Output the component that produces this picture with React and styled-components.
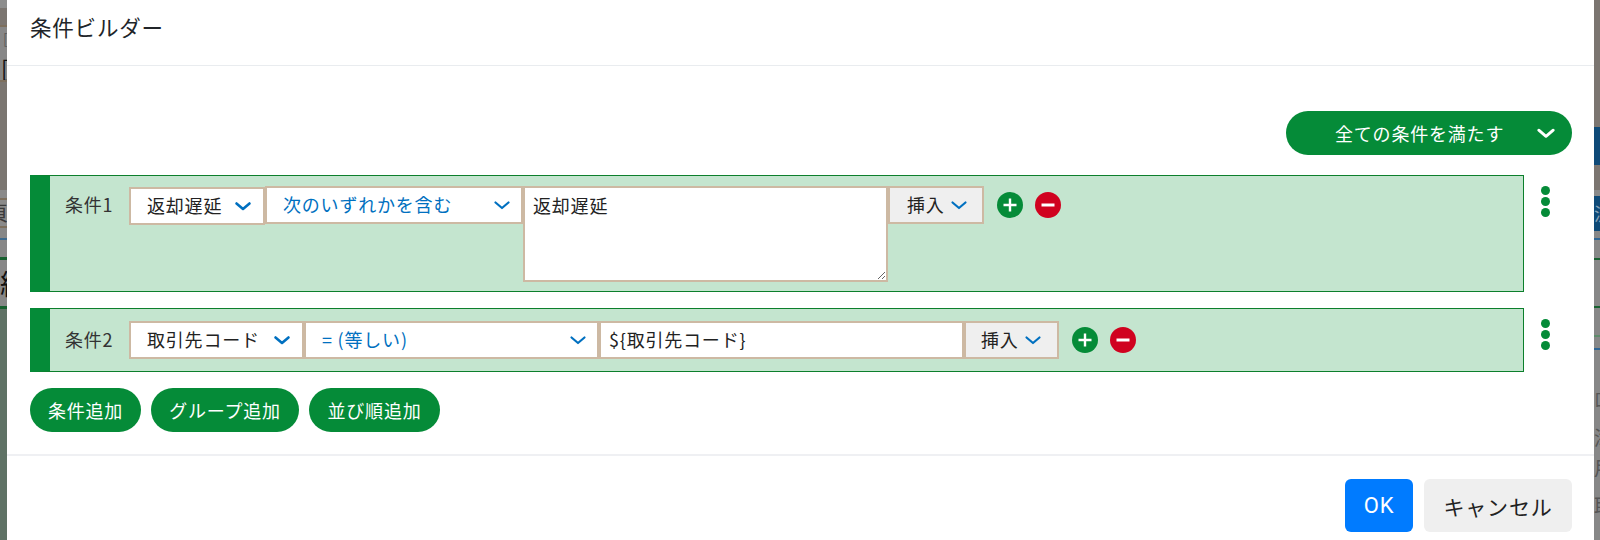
import React from "react"
import styled, { createGlobalStyle } from "styled-components"

const GlobalStyle = createGlobalStyle`
  html, body {
    margin: 0;
    padding: 0;
    background: #fff;
    overflow: hidden;
  }
  body {
    font-family: "Noto Sans CJK JP", "Noto Sans", sans-serif;
    color: #222;
    letter-spacing: 0.05em;
  }
`

const Page = styled.div`
  display: flex;
  width: 1600px;
  height: 540px;
  overflow: hidden;
`

const Backdrop = styled.div`
  display: flex;
  flex-direction: column;
  flex: none;
  width: ${(p) => p.$w}px;
  background: #878787;
  overflow: hidden;
`

const Band = styled.div`
  flex: none;
  height: ${(p) => p.$h}px;
  background: ${(p) => p.$c || "#878787"};
  color: ${(p) => p.$fg || "#3a3a3a"};
  font-size: ${(p) => p.$size || 20}px;
  line-height: ${(p) => p.$h}px;
  padding-left: ${(p) => p.$pad || 0}px;
  margin-left: ${(p) => p.$shift || 0}px;
  letter-spacing: 0;
  white-space: nowrap;
`

const Dialog = styled.div`
  flex: 1;
  display: flex;
  flex-direction: column;
  min-width: 0;
  background: #fff;
`

const Header = styled.header`
  height: 66px;
  padding: 10px 23px;
  box-sizing: border-box;
  border-bottom: 1px solid #e9ecef;
  font-size: 21.5px;
  line-height: 34px;
  color: #212529;
`

const Body = styled.div`
  padding: 45px 22px 0 23px;
  height: 390px;
  box-sizing: border-box;
  border-bottom: 2px solid #eff0f3;
`

const TopBar = styled.div`
  display: flex;
  justify-content: flex-end;
`

const MatchSelect = styled.div`
  display: flex;
  align-items: center;
  width: 286px;
  height: 44px;
  box-sizing: border-box;
  padding: 0 16px 0 49px;
  border-radius: 22px;
  background: #058b38;
  color: #fff;
  font-size: 18px;
  justify-content: space-between;
`

const RowWrap = styled.div`
  display: flex;
  align-items: flex-start;
  margin-top: ${(p) => p.$top}px;
`

const Row = styled.div`
  display: flex;
  align-items: flex-start;
  width: 1494px;
  height: ${(p) => p.$h}px;
  box-sizing: border-box;
  padding: ${(p) => p.$pad}px 0 0 15px;
  background: #c4e5cf;
  border: 1px solid #0c7f2c;
  border-left: 20px solid #058b38;
`

const RowLabel = styled.span`
  flex: none;
  width: 64px;
  font-size: 18px;
  line-height: 36px;
  color: #333;
`

const Field = styled.div`
  flex: none;
  display: flex;
  align-items: center;
  justify-content: space-between;
  width: ${(p) => p.$w}px;
  height: 38px;
  box-sizing: border-box;
  margin-top: ${(p) => p.$top || 0}px;
  padding: 0 ${(p) => p.$right || 10}px 2px ${(p) => p.$left || 16}px;
  background: ${(p) => p.$bg || "#fff"};
  border: 2px solid #cdb9a3;
  color: ${(p) => p.$color || "#222"};
  font-size: 18px;
  white-space: nowrap;

  svg {
    margin-top: 2px;
  }
`

const FieldArea = styled.textarea`
  flex: none;
  display: block;
  width: 365px;
  height: 96px;
  box-sizing: border-box;
  margin: 0;
  padding: 3px 8px;
  background: #fff;
  border: 2px solid #cdb9a3;
  border-radius: 0;
  outline: none;
  color: #222;
  font-family: inherit;
  font-size: 18px;
  letter-spacing: inherit;
  line-height: 28px;
`

const InsertButton = styled(Field)`
  justify-content: flex-start;
  gap: 5px;
  padding: 0 0 3px ${(p) => p.$left || 17}px;
  background: #efefef;
`

const RoundIcon = styled.svg`
  flex: none;
  display: block;
  width: 26px;
  height: 26px;
  margin-top: 6px;
  margin-left: ${(p) => p.$gap}px;
`

const Kebab = styled.div`
  flex: none;
  display: flex;
  flex-direction: column;
  gap: 2px;
  margin: 11px 0 0 17px;
`

const Dot = styled.span`
  display: block;
  width: 9px;
  height: 9px;
  border-radius: 50%;
  background: #058b38;
`

const AddBar = styled.div`
  display: flex;
  gap: 10px;
  margin-top: 16px;
`

const AddButton = styled.button`
  width: ${(p) => p.$w}px;
  height: 44px;
  padding: 0;
  border: 0;
  border-radius: 22px;
  background: #058b38;
  color: #fff;
  font-family: inherit;
  font-size: 18px;
  letter-spacing: inherit;
`

const Footer = styled.footer`
  display: flex;
  justify-content: flex-end;
  gap: 11px;
  padding: 23px 22px 0 0;
`

const DialogButton = styled.button`
  width: ${(p) => p.$w}px;
  height: 53px;
  padding: 0;
  border: 0;
  border-radius: 6px;
  background: ${(p) => p.$bg};
  color: ${(p) => p.$color};
  font-family: ${(p) => (p.$latin ? "Roboto, sans-serif" : "inherit")};
  font-size: ${(p) => (p.$latin ? 22 : 21)}px;
  letter-spacing: inherit;
`

const Chevron = ({ color = "#0070c0", size = 18, weight = 2.6 }) => (
  <svg width={size} height={size} viewBox="0 0 18 18" fill="none">
    <path
      d="M2.5 6.5 L9 12 L15.5 6.5"
      stroke={color}
      strokeWidth={weight}
      strokeLinecap="round"
      strokeLinejoin="round"
    />
  </svg>
)

const PlusIcon = ({ gap }) => (
  <RoundIcon $gap={gap} viewBox="0 0 26 26">
    <circle cx="13" cy="13" r="13" fill="#058b38" />
    <path d="M13 6.5 V19.5 M6.5 13 H19.5" stroke="#fff" strokeWidth="2.4" />
  </RoundIcon>
)

const MinusIcon = ({ gap }) => (
  <RoundIcon $gap={gap} viewBox="0 0 26 26">
    <circle cx="13" cy="13" r="13" fill="#d0021f" />
    <path d="M6.5 13 H19.5" stroke="#fff" strokeWidth="3" />
  </RoundIcon>
)

const Dots = () => (
  <Kebab>
    <Dot />
    <Dot />
    <Dot />
  </Kebab>
)

const leftBands = [
  { h: 8, c: "#8d8d8d" },
  { h: 17, c: "#7b7570" },
  { h: 2, c: "#7d6f5d" },
  { h: 22, c: "#878787", t: "[", size: 14, pad: 3, fg: "#5a5a5a" },
  { h: 5, c: "#878787" },
  { h: 26, c: "#878787", t: "[", size: 22, pad: 1, fg: "#111" },
  { h: 2, c: "#7d6f5d" },
  { h: 108, c: "#7a7570" },
  { h: 8, c: "#8a8a8a" },
  { h: 2, c: "#7d6f5d" },
  { h: 26, c: "#8a8a8a", t: "頁", size: 20, shift: -12 },
  { h: 2, c: "#7d6f5d" },
  { h: 10, c: "#878787" },
  { h: 2, c: "#3d6a8e" },
  { h: 17, c: "#878787" },
  { h: 3, c: "#17602f" },
  { h: 46, c: "#878787", t: "紙", size: 28, fg: "#111" },
  { h: 3, c: "#17602f" },
  { h: 231, c: "#5f7265" },
]

const rightBands = [
  { h: 127, c: "#7b7570" },
  { h: 38, c: "#0e4a78" },
  { h: 25, c: "#7b7570" },
  { h: 6, c: "#8a8a8a" },
  { h: 35, c: "#0e4a78", t: "流", size: 18, fg: "#8aa2b6" },
  { h: 7, c: "#878787" },
  { h: 2, c: "#2f6594" },
  { h: 18, c: "#878787" },
  { h: 2, c: "#17602f" },
  { h: 46, c: "#878787" },
  { h: 2, c: "#17602f" },
  { h: 27, c: "#878787" },
  { h: 2, c: "#5f8c6c" },
  { h: 11, c: "#878787" },
  { h: 2, c: "#2f6594" },
  { h: 42, c: "#878787" },
  { h: 15, c: "#878787", t: "口", size: 18, fg: "#555" },
  { h: 22, c: "#878787" },
  { h: 18, c: "#878787", t: "添", size: 20, fg: "#555" },
  { h: 12, c: "#878787" },
  { h: 18, c: "#878787", t: "用", size: 20, fg: "#555" },
  { h: 20, c: "#878787" },
  { h: 18, c: "#878787", t: "取", size: 20, fg: "#555" },
]

const BackdropBands = ({ bands, w }) => (
  <Backdrop $w={w}>
    {bands.map((b, i) => (
      <Band key={i} $h={b.h} $c={b.c} $fg={b.fg} $size={b.size} $pad={b.pad} $shift={b.shift}>
        {b.t}
      </Band>
    ))}
  </Backdrop>
)

const App = () => (
  <Page>
    <GlobalStyle />
    <BackdropBands bands={leftBands} w={7} />
    <Dialog>
      <Header>条件ビルダー</Header>
      <Body>
        <TopBar>
          <MatchSelect>
            全ての条件を満たす
            <Chevron color="#fff" size={20} />
          </MatchSelect>
        </TopBar>

        <RowWrap $top={20}>
          <Row $h={117} $pad={10}>
            <RowLabel>条件1</RowLabel>
            <Field $w={136} $top={1} $right={11}>
              返却遅延
              <Chevron />
            </Field>
            <Field $w={258} $color="#0070c0" $right={10}>
              次のいずれかを含む
              <Chevron weight={2.2} />
            </Field>
            <FieldArea defaultValue="返却遅延" />
            <InsertButton $w={96}>
              挿入
              <Chevron weight={2.2} />
            </InsertButton>
            <PlusIcon gap={13} />
            <MinusIcon gap={12} />
          </Row>
          <Dots />
        </RowWrap>

        <RowWrap $top={16}>
          <Row $h={64} $pad={12}>
            <RowLabel>条件2</RowLabel>
            <Field $w={175} $right={11}>
              取引先コード
              <Chevron />
            </Field>
            <Field $w={295} $color="#0070c0" $right={10}>
              = (等しい)
              <Chevron weight={2.2} />
            </Field>
            <Field $w={365} $left={8}>
              {"${取引先コード}"}
            </Field>
            <InsertButton $w={95} $left={15}>
              挿入
              <Chevron weight={2.2} />
            </InsertButton>
            <PlusIcon gap={13} />
            <MinusIcon gap={12} />
          </Row>
          <Dots />
        </RowWrap>

        <AddBar>
          <AddButton $w={111}>条件追加</AddButton>
          <AddButton $w={148}>グループ追加</AddButton>
          <AddButton $w={131}>並び順追加</AddButton>
        </AddBar>
      </Body>
      <Footer>
        <DialogButton $w={68} $bg="#007bff" $color="#fff" $latin>
          OK
        </DialogButton>
        <DialogButton $w={148} $bg="#efefef" $color="#222">
          キャンセル
        </DialogButton>
      </Footer>
    </Dialog>
    <BackdropBands bands={rightBands} w={6} />
  </Page>
)

export default App
